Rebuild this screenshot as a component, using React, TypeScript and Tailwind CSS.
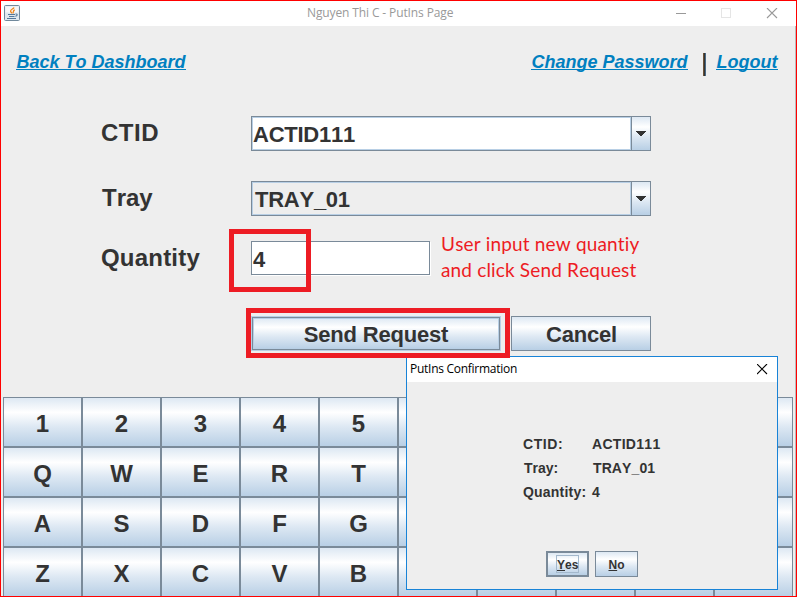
import type { ReactNode } from "react";

const columns = 10;
const keyRows = ["12345", "QWERT", "ASDFG", "ZXCVB"];

const metal =
  "bg-[linear-gradient(to_bottom,#dde8f3_0%,#ffffff_30%,#dde8f3_60%,#b8cfe5_100%)]";

function NavLink({ children, className = "" }: { children: ReactNode; className?: string }) {
  return (
    <a
      className={`block h-[19px] border-b border-[#0080c0] pl-[0.5px] text-[18px] leading-[22px] font-bold text-[#0080c0] italic whitespace-nowrap ${className}`}
    >
      {children}
    </a>
  );
}

function FieldLabel({ children, className = "" }: { children: ReactNode; className?: string }) {
  return <label className={`w-[150px] shrink-0 text-[24px] leading-[33px] ${className}`}>{children}</label>;
}

function Combo({ children, className = "" }: { children: ReactNode; className?: string }) {
  return (
    <div className="flex h-[35px] w-[400px] border border-[#7a8a99]">
      <div
        className={`flex-1 border border-[#b8cfe5] text-[22px] leading-[34px] tracking-[-0.25px] ${className}`}
      >
        {children}
      </div>
      <div className={`flex w-[19px] items-center justify-center border-l border-[#7a8a99] ${metal}`}>
        <svg width="10" height="5" viewBox="0 0 10 5" shapeRendering="crispEdges">
          <path d="M0 0h10v1h-1v1h-1v1h-1v1h-1v1h-2v-1h-1v-1h-1v-1h-1v-1h-1z" fill="#333" />
        </svg>
      </div>
    </div>
  );
}

function JavaIcon() {
  return (
    <svg width="16" height="16" viewBox="0 0 16 16" fill="none">
      <rect x=".5" y=".5" width="15" height="15" rx="1" fill="#dfe8ef" stroke="#71899c" />
      <path d="M1.5 1.5h13v6h-13z" fill="#f5f7f9" />
      <path
        d="M10 2.500C9.500 4 6.300 4.300 6.600 6.200c.1.900 1.200 1.200 1.200 2.300M10.800 5C8.600 5.500 9.800 7 8.900 8.300"
        stroke="#f0861c"
        strokeWidth="1.300"
      />
      <path
        d="M4 9.500h7M5 11.500h5.500M3 13.500h9M11.500 9c2.500-.500 2 2-.200 2.300"
        stroke="#54799b"
        strokeWidth="1.100"
      />
    </svg>
  );
}

function ConfirmDialog() {
  return (
    <section className="absolute top-[356px] left-[406px] flex h-[234px] w-[372px] flex-col border border-[#1883d7] bg-[#eee]">
      <header className="flex h-[25px] justify-between bg-white pr-[9px] pl-[3px] font-['Open_Sans',sans-serif] text-[12px] leading-[24px] font-normal text-black">
        <span className="tracking-[-0.27px]">PutIns Confirmation</span>
        <svg className="mt-[7px]" width="11" height="11" viewBox="0 0 11 11">
          <path d="M0 0l10 10M10 0l-10 10" stroke="#000" strokeWidth="1.100" />
        </svg>
      </header>
      <dl className="mt-[50px] ml-[116px] grid grid-cols-[69px_1fr] text-[14px] leading-6">
        <dt className="tracking-[0.6px]">CTID:</dt>
        <dd className="tracking-[0.3px]">ACTID111</dd>
        <dt className="pl-px">Tray:</dt>
        <dd className="pl-px tracking-[0.1px]">TRAY_01</dd>
        <dt className="tracking-[0.2px]">Quantity:</dt>
        <dd>4</dd>
      </dl>
      <div className="mt-[47px] ml-[139px] flex gap-1.5 text-[12px]">
        <button className={`flex h-[26px] w-[43px] items-center justify-center border-2 border-[#7a8a99] ${metal}`}>
          <span className="block h-[18px] w-[23px] border border-[#a3b8cc] text-center leading-[18px]">
            <u>Y</u>es
          </span>
        </button>
        <button className={`flex h-[26px] w-[43px] items-center justify-center border border-[#7a8a99] pt-px ${metal}`}>
          <u>N</u>o
        </button>
      </div>
    </section>
  );
}

export default function App() {
  return (
    <div className="relative flex h-[597px] w-[797px] flex-col overflow-hidden border border-[#f00] bg-[#eee] font-['Liberation_Sans',Arial,sans-serif] font-bold text-[#333] [font-kerning:none]">
      <header className="flex h-[25px] shrink-0 items-start bg-white pt-1 pl-[3px]">
        <JavaIcon />
        <h1 className="ml-[287px] font-['Open_Sans',sans-serif] text-[12px] leading-4 font-normal tracking-[-0.12px] whitespace-nowrap text-[#999]">
          Nguyen Thi C - PutIns Page
        </h1>
        <svg className="mt-[3px] mr-[18px] ml-auto" width="102" height="11" viewBox="0 0 102 11" fill="none">
          <path d="M0 5.500h10" stroke="#999" />
          <rect x="45.500" y=".5" width="9" height="9" stroke="#e5e5e5" />
          <path d="M91 0l10 10M101 0l-10 10" stroke="#999" strokeWidth="1.100" />
        </svg>
      </header>

      <main className="flex flex-1 flex-col border-r border-[#bbb]">
        <nav className="flex shrink-0 items-start pt-[25px] pr-[17px] pl-[15px]">
          <NavLink className="w-[170px]">Back To Dashboard</NavLink>
          <NavLink className="ml-auto w-[157px]">Change Password</NavLink>
          <span className="mt-[2px] mr-[10px] ml-[15px] h-[23px] w-[3px] bg-[linear-gradient(to_right,#6b5136_0_1px,#333_1px_2px,#4a6a85_2px_3px)]" />
          <NavLink className="w-[62px]">Logout</NavLink>
        </nav>

        <form className="flex flex-col pt-[40px] pl-[100px]">
          <div className="flex h-[65px]">
            <FieldLabel className="tracking-[0.5px]">CTID</FieldLabel>
            <Combo className="bg-white">ACTID111</Combo>
          </div>
          <div className="flex h-[60px]">
            <FieldLabel className="pl-px">Tray</FieldLabel>
            <Combo className="pl-[2px]">TRAY_01</Combo>
          </div>
          <div className="flex h-[75px]">
            <FieldLabel className="tracking-[0.2px]">Quantity</FieldLabel>
            <div className="h-[34px] w-[179px] border border-[#7a8a99] bg-white pl-px text-[22px] leading-[36px] shadow-[1px_1px_0_#fff]">
              4
            </div>
            <p className="-mt-2.5 ml-[11px] font-['Lato',sans-serif] text-[19px] leading-[26px] font-normal tracking-[0.16px] whitespace-nowrap text-[#ed1c24]">
              User input new quantiy
              <br />
              and click Send Request
            </p>
          </div>
          <div className="flex gap-2.5 pl-[150px] text-[22px] leading-[31px] tracking-[-0.2px]">
            <div className="h-[35px] w-[250px] border border-[#b8cfe5]">
              <button
                className={`block h-[33px] w-full border border-[#7a8a99] pt-px shadow-[inset_0_0_0_1px_#b8cfe5] ${metal}`}
              >
                Send Request
              </button>
            </div>
            <button className={`h-[35px] w-[140px] border border-[#7a8a99] pt-[2px] pl-px ${metal}`}>Cancel</button>
          </div>
        </form>

        <div className="mt-[46px] ml-[2px] grid w-[790px] grid-cols-10">
          {keyRows.flatMap((row, r) =>
            Array.from({ length: columns }, (_, c) => (
              <button
                key={`${r}-${c}`}
                className={`h-[50px] border border-[#7a8a99] pt-[3px] text-[24px] leading-[45px] ${metal}`}
              >
                {row[c]}
              </button>
            )),
          )}
        </div>
      </main>

      <div className="absolute inset-0 -m-px">
        <ConfirmDialog />
        <div className="absolute top-[229px] left-[229px] h-[63px] w-[82px] border-5 border-[#ed1c24]" />
        <div className="absolute top-[308px] left-[246px] h-[50px] w-[264px] border-5 border-[#ed1c24]" />
      </div>
    </div>
  );
}
